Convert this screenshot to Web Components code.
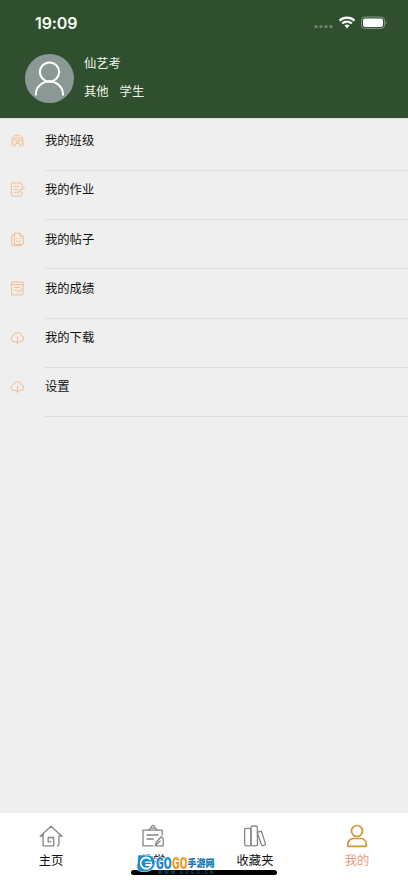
<!DOCTYPE html>
<html lang="zh-CN">
<head>
<meta charset="utf-8">
<meta name="viewport" content="width=device-width">
<title>我的</title>
<style>
html,body{margin:0;height:100%;overflow:hidden}
body{font-family:"Liberation Sans","Noto Sans CJK SC",sans-serif;background:#efefef;color:#111}
</style>
</head>
<body>
<mine-page></mine-page>
<script>
const define = (name, html, setup) => customElements.define(name, class extends HTMLElement {
  constructor() {
    super();
    this.attachShadow({mode: "open"}).innerHTML = html;
  }
  connectedCallback() { if (setup) setup(this, this.shadowRoot); }
});

const ICONS = {
  class: '<path d="M2 9.2A5.7 5.7 0 1 1 13 9.2M4.3 5.8Q7.5 3 10.7 5.8M4.1 6v1.6M10.9 6v1.6"/><circle cx="7.5" cy="8" r="1.6"/><path d="M4.7 13.2q0-3 2.8-3t2.8 3M1.2 12q0-2.2 2.2-2.2M13.8 12q0-2.2-2.2-2.2M3.2 13v-1M11.8 13v-1"/>',
  work: '<path d="M12 4.5V2.3q0-1.4-1.4-1.4H2.8q-1.4 0-1.4 1.4v10.4q0 1.4 1.4 1.4h7.8q1.4 0 1.4-1.4v-2.2M4 4.4h5M4 7.3h3.8M4 10.3h2"/><path d="m8 10.6.6-1.7 5-4 .8 1-5 4z"/>',
  post: '<path d="M5.2 1.2h5l3.1 3.1v7.2q0 .9-.9.9H4.3V2.1q0-.9.9-.9zM10 1.4v3.1h3.1M4.2 3H2.6q-.9 0-.9.9v9q0 .9.9.9h7.8q.9 0 .9-1.3M6.7 6.5h1M10 6.5h1M6.4 9q2.1 1.7 4.2 0"/>',
  score: '<path d="M2 1.1h11v12.8H2zM2 3.7h11M4.3 6.5h5.2M4.3 9h2M7 9.5l1.8 1.8L12 7.8"/>',
  cloud: '<path d="M5.2 11.6H3.9A3 3 0 0 1 3.2 5.8 4.4 4.4 0 0 1 11.7 6a2.9 2.9 0 0 1-.4 5.6H9.8M7.5 7v6.3M6 11.7l1.5 1.6L9 11.7"/>',
  home: '<path d="M1.2 12.2 12 2.3l10.8 9.9M4.1 9.7v12.1h10.6v-8.3H9.2v4.3h2.7M1.2 12.2h2.9M22.8 12.2h-2.9v8q0 1.6-1.5 1.6"/>',
  teach: '<path d="M21.2 11V6.2H2v15.6h10M7.2 6.2 10.4 3.6M13.6 3.6l3.2 2.6M6 11h11M6 15h6.5M14.2 21.8l1-3.4 5-5.6 2 1.8v7.2zM14.2 21.8l5-4.9"/><circle cx="12" cy="2.9" r="1.5"/>',
  books: '<rect x="1.6" y="4.3" width="6.4" height="17.5" rx="1.6"/><rect x="8" y="2" width="6.4" height="19.8" rx="1.6"/><path d="m14.4 8.2 2.8-.9q1.1-.3 1.5.8l3.7 11.5q.3 1.2-.8 1.6l-1.6.5q-1.1.3-1.5-.8l-4.1-12.1"/>',
  user: '<circle cx="12" cy="7" r="5.5"/><path d="M3.6 22.4q-1 0-1-1.1c0-4.1 2.4-6.8 6-6.8h6.8c3.6 0 6 2.7 6 6.8q0 1.1-1 1.1z"/>'
};

define("line-icon", `<style>:host{display:block;flex:none}svg{display:block;width:100%;height:100%;fill:none;stroke:currentColor;stroke-linecap:round;stroke-linejoin:round}</style><svg></svg>`, (el, root) => {
  const svg = root.querySelector("svg"), size = el.getAttribute("size");
  svg.setAttribute("viewBox", `0 0 ${size} ${size}`);
  svg.style.strokeWidth = el.getAttribute("weight");
  el.style.width = el.style.height = size + "px";
  svg.innerHTML = ICONS[el.getAttribute("name")] || "";
});

define("status-bar", `<style>
:host{display:flex;height:45px;padding:0 21px 0 35px;box-sizing:border-box;align-items:center;justify-content:space-between;color:#f7fff5}
time{font:600 16px/20px Inter,"Liberation Sans",sans-serif;letter-spacing:-.1px}
svg{width:74px;height:16px;display:block}
</style><time>19:09</time>
<svg viewBox="0 0 74 16"><g fill="#70866e"><circle cx="3" cy="11.6" r="1.7"/><circle cx="8" cy="11.6" r="1.7"/><circle cx="13" cy="11.6" r="1.7"/><circle cx="18" cy="11.6" r="1.7"/></g>
<g fill="none" stroke="#fff" stroke-width="2.3"><path d="M26.5 5.6a11 11 0 0 1 15 0M29.2 8.5a7 7 0 0 1 9.6 0"/></g><path d="M31.5 10.6a3.6 3.6 0 0 1 5 0L34 13.4z" fill="#fff"/>
<rect x="48.5" y="2" width="23" height="11.4" rx="3.2" fill="none" stroke="#849681"/><rect x="50" y="3.5" width="20" height="8.4" rx="1.8" fill="#fff"/><path d="M72.7 5.7q2 2 0 4z" fill="#849681"/></svg>`);

define("profile-header", `<style>
:host{display:block;height:119px;background:#304f2f;border-bottom:1px solid #dce2db;box-sizing:border-box;color:#eef6ea}
.row{display:flex;padding:8.5px 25px 0;gap:10px}
.avatar{width:49px;height:49px;display:block}
.info{display:flex;flex-direction:column;font-size:12.3px;line-height:18px;gap:10px;padding-top:1.5px}
.tags{display:flex;gap:11px}
</style><status-bar></status-bar><div class="row">
<svg class="avatar" viewBox="0 0 49 49"><circle cx="24.5" cy="24.5" r="24.5" fill="#8b9896"/><g fill="none" stroke="#fff" stroke-width="2"><circle cx="24.5" cy="18" r="9.6"/><path d="M10.8 41.5v-1.2a13.6 12.7 0 0 1 27.2 0v1.2"/></g></svg>
<div class="info"><div><slot name="name"></slot></div><div class="tags"><slot></slot></div></div></div>`);

define("menu-row", `<style>
:host{display:flex;height:49.25px;box-sizing:border-box;padding-left:10px;color:#111}
line-icon{color:#eeb980;margin:11.5px 20px 0 0}
.label{flex:1;border-bottom:1px solid #dedede;font-size:12.3px;line-height:18px;padding-top:10.5px;box-sizing:border-box}
</style><line-icon size="15" weight=".9"></line-icon><div class="label"><slot></slot></div>`, (el, root) => {
  const icon = root.querySelector("line-icon");
  icon.setAttribute("name", el.getAttribute("icon"));
  icon.replaceWith(icon.cloneNode());
});

define("tab-item", `<style>
:host{display:flex;flex-direction:column;align-items:center;flex:1;color:#111;font-size:12.3px;line-height:16px;gap:4.5px;padding-top:11px}
line-icon{color:#858585}
:host([active]){color:#eb967d}
:host([active]) line-icon{color:#d0963a}
</style><line-icon size="24" weight="1.3"></line-icon><span><slot></slot></span>`, (el, root) => {
  const icon = root.querySelector("line-icon");
  icon.setAttribute("name", el.getAttribute("icon"));
  if (el.hasAttribute("active")) icon.setAttribute("weight", "1.7");
  icon.replaceWith(icon.cloneNode());
});

define("site-mark", `<style>
:host{display:block;width:80px;height:20px}svg{display:block;overflow:visible}
text{font-weight:900;font-family:"Liberation Sans","Noto Sans CJK SC",sans-serif;paint-order:stroke;stroke:#fff;stroke-width:1.6px;stroke-linejoin:round}
.go{font-family:Roboto,"Liberation Sans",sans-serif;font-size:16px}
</style><svg width="80" height="20" viewBox="0 0 80 20">
<path d="M2 1h8q9 0 9 7.5T11 17.5H6Q1 17.5 1 12z" fill="#168bd2" stroke="#fff" stroke-width=".6"/>
<path d="M14.7 5.7A5.6 5.6 0 1 0 15.5 11H9.4" fill="none" stroke="#fff" stroke-width="1.8"/><path d="M9 8.2h6.3V11" fill="none" stroke="#fff" stroke-width="1.3"/>
<text class="go" x="20" y="14.5" textLength="15.5" lengthAdjust="spacingAndGlyphs" fill="#1787c8">GO</text><text class="go" x="36" y="14.5" textLength="15.5" lengthAdjust="spacingAndGlyphs" fill="#f39b18">GO</text>
<text x="51.5" y="12.5" font-size="10.5" textLength="27" lengthAdjust="spacingAndGlyphs" fill="#1878b5">手游网</text></svg>`);

define("tab-bar", `<style>
:host{display:flex;position:relative;height:70px;background:#fff}
.indicator{position:absolute;left:131px;top:56.5px;width:146px;height:5px;border-radius:3px;background:#000}
site-mark{position:absolute;left:136px;top:41px}
.url{position:absolute;left:158px;top:56px;font:700 5px/6px "Liberation Sans",sans-serif;letter-spacing:1.6px;color:#174e70}
</style><slot></slot><div class="indicator"></div><site-mark></site-mark><span class="url">WWW.GOGO.CN</span>`);

define("mine-page", `<style>
:host{display:flex;flex-direction:column;height:883px;background:#efefef}
main{flex:1;padding-top:2.5px}
</style>
<profile-header><span slot="name">仙艺考</span><span>其他</span><span>学生</span></profile-header>
<main><menu-row icon="class">我的班级</menu-row><menu-row icon="work">我的作业</menu-row><menu-row icon="post">我的帖子</menu-row><menu-row icon="score">我的成绩</menu-row><menu-row icon="cloud">我的下载</menu-row><menu-row icon="cloud">设置</menu-row></main>
<tab-bar><tab-item icon="home">主页</tab-item><tab-item icon="teach">教学</tab-item><tab-item icon="books">收藏夹</tab-item><tab-item icon="user" active>我的</tab-item></tab-bar>`);
</script>
</body>
</html>
